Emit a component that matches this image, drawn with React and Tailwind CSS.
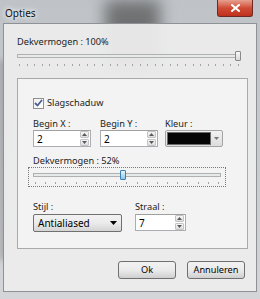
import React from "react";

const font = { fontFamily: '"Noto Sans", "Open Sans", sans-serif' };

function Ticks({ count }) {
  return (
    <div className="flex justify-between px-[2px]">
      {Array.from({ length: count }).map((_, i) => (
        <div key={i} className="w-px h-[2px] bg-[#a3a3a3]" />
      ))}
    </div>
  );
}

function Spinner() {
  return (
    <div className="flex flex-col gap-px w-[9px] h-[15px] mr-px">
      <div className="flex-1 flex items-center justify-center border border-[#c3c3c3] rounded-[1px] bg-gradient-to-b from-[#f6f6f6] to-[#dedede]">
        <svg width="5" height="3" viewBox="0 0 5 3"><path d="M0 3 L2.5 0 L5 3 Z" fill="#5a5a5a" /></svg>
      </div>
      <div className="flex-1 flex items-center justify-center border border-[#c3c3c3] rounded-[1px] bg-gradient-to-b from-[#f6f6f6] to-[#dedede]">
        <svg width="5" height="3" viewBox="0 0 5 3"><path d="M0 0 L2.5 3 L5 0 Z" fill="#5a5a5a" /></svg>
      </div>
    </div>
  );
}

function NumBox({ value, width }) {
  return (
    <div className={`${width} h-[17px] flex items-center justify-between bg-white border border-[#abadb3] border-t-[#a0a0a0]`}>
      <span className="pl-[3px] text-[10px] leading-none text-black">{value}</span>
      <Spinner />
    </div>
  );
}

export default function App() {
  return (
    <div className="w-[260px] h-[299px] relative overflow-hidden bg-gradient-to-b from-[#bfc3c7] via-[#c8cbce] to-[#d3d5d8] text-[9.2px] text-[#222]" style={font}>
      {/* blurred background behind the glass */}
      <div className="absolute left-[105px] top-[0px] w-[55px] h-[70px] bg-[#3a3a3a] opacity-60 blur-[8px]" />
      <div className="absolute left-[0px] top-[60px] w-[6px] h-[200px] bg-[#555] opacity-40 blur-[3px]" />

      {/* title bar */}
      <div className="relative h-[23px] flex items-start justify-between">
        <span className="ml-[5px] mt-[6px] text-[10px] text-[#111]" style={{ textShadow: "0 0 6px #fff, 0 0 4px #fff" }}>Opties</span>
        <div className="mr-[7px] w-[36px] h-[17px] rounded-b-[3px] border border-t-0 border-[#6d2a24] bg-gradient-to-b from-[#e6a08f] via-[#cf4b36] to-[#c0301c] flex items-center justify-center">
          <svg width="9" height="8" viewBox="0 0 9 8">
            <path d="M1 1 L8 7 M8 1 L1 7" stroke="#fff" strokeWidth="2" strokeLinecap="square" />
          </svg>
        </div>
      </div>

      {/* client area */}
      <div className="relative mx-[3px] h-[269px] border border-[#8e9196] bg-[#ececec]/95 flex flex-col">
        <div className="ml-[13px] mt-[12px] leading-[12px]">Dekvermogen : 100%</div>
        <div className="ml-[13px] w-[224px] mt-[3px]">
          <div className="relative h-[10px] flex items-center">
            <div className="w-full h-[4px] border border-[#b0b0b0] bg-[#e7eaea]" />
            <div className="absolute right-0 top-0 w-[6px] h-[10px] border border-[#8a8a8a] rounded-[1px] bg-gradient-to-b from-[#f8f8f8] to-[#d8d8d8]" />
          </div>
          <div className="mt-[3px]"><Ticks count={30} /></div>
        </div>

        {/* panel */}
        <div className="ml-[13px] mt-[12px] w-[231px] h-[171px] border border-[#a9a9a9] bg-[#f4f4f4]/90 flex flex-col pl-[15px]">
          <div className="mt-[18px] flex items-center gap-[3px]">
            <div className="w-[11px] h-[11px] border border-[#8f8f8f] bg-gradient-to-br from-[#f0f0f0] to-[#ffffff] flex items-center justify-center">
              <svg width="9" height="8" viewBox="0 0 9 8">
                <path d="M1 4 L3.5 6.5 L8 1" stroke="#4a5f97" strokeWidth="1.8" fill="none" />
              </svg>
            </div>
            <span className="leading-[12px]">Slagschaduw</span>
          </div>

          <div className="mt-[9px] flex">
            <div className="w-[67px] flex flex-col">
              <span className="leading-[12px]">Begin X :</span>
              <NumBox value="2" width="w-[58px]" />
            </div>
            <div className="w-[65px] flex flex-col">
              <span className="leading-[12px]">Begin Y :</span>
              <NumBox value="2" width="w-[58px]" />
            </div>
            <div className="flex flex-col">
              <span className="leading-[12px]">Kleur :</span>
              <div className="w-[58px] h-[17px] flex items-center border border-[#a5a5a5] bg-gradient-to-b from-[#f2f2f2] to-[#dcdcdc] rounded-[2px] p-[1px]">
                <div className="w-[44px] h-full bg-[#050505] border border-[#6a6a6a]" />
                <div className="flex-1 flex items-center justify-center">
                  <svg width="5" height="3" viewBox="0 0 5 3"><path d="M0 0 L2.5 3 L5 0 Z" fill="#777" /></svg>
                </div>
              </div>
            </div>
          </div>

          <span className="mt-[8px] leading-[12px]">Dekvermogen : 52%</span>
          <div className="-ml-[5px] w-[198px] h-[20px] border border-dotted border-[#7a7a7a] flex flex-col px-[4px] pt-[2px]">
            <div className="relative h-[10px] flex items-center">
              <div className="w-full h-[4px] border border-[#b0b0b0] bg-[#e7eaea]" />
              <div className="absolute left-[87px] top-0 w-[6px] h-[10px] border border-[#3c7fb1] rounded-[1px] bg-gradient-to-b from-[#e5f4fc] to-[#8cc6ea]" />
            </div>
            <div className="mt-[2px]"><Ticks count={19} /></div>
          </div>

          <div className="mt-[14px] flex">
            <div className="w-[102px] flex flex-col">
              <span className="leading-[12px] mb-[1px]">Stijl :</span>
              <div className="w-[89px] h-[18px] flex items-center justify-between border border-[#707070] rounded-[2px] bg-gradient-to-b from-[#f2f2f2] via-[#ebebeb] to-[#d4d4d4] px-[4px]">
                <span className="text-[10px] leading-none text-black">Antialiased</span>
                <svg width="7" height="4" viewBox="0 0 7 4"><path d="M0 0 L3.5 4 L7 0 Z" fill="#000" /></svg>
              </div>
            </div>
            <div className="flex flex-col">
              <span className="leading-[12px] mb-[1px]">Straal :</span>
              <NumBox value="7" width="w-[51px]" />
            </div>
          </div>
        </div>

        {/* buttons */}
        <div className="mt-[12px] flex justify-end gap-[11px] pr-[11px]">
          <div className="w-[58px] h-[18px] flex items-center justify-center border border-[#707070] rounded-[3px] bg-gradient-to-b from-[#f2f2f2] via-[#ebebeb] to-[#cfcfcf] text-black">Ok</div>
          <div className="w-[58px] h-[18px] flex items-center justify-center border border-[#707070] rounded-[3px] bg-gradient-to-b from-[#f2f2f2] via-[#ebebeb] to-[#cfcfcf] text-black">Annuleren</div>
        </div>
      </div>
    </div>
  );
}
